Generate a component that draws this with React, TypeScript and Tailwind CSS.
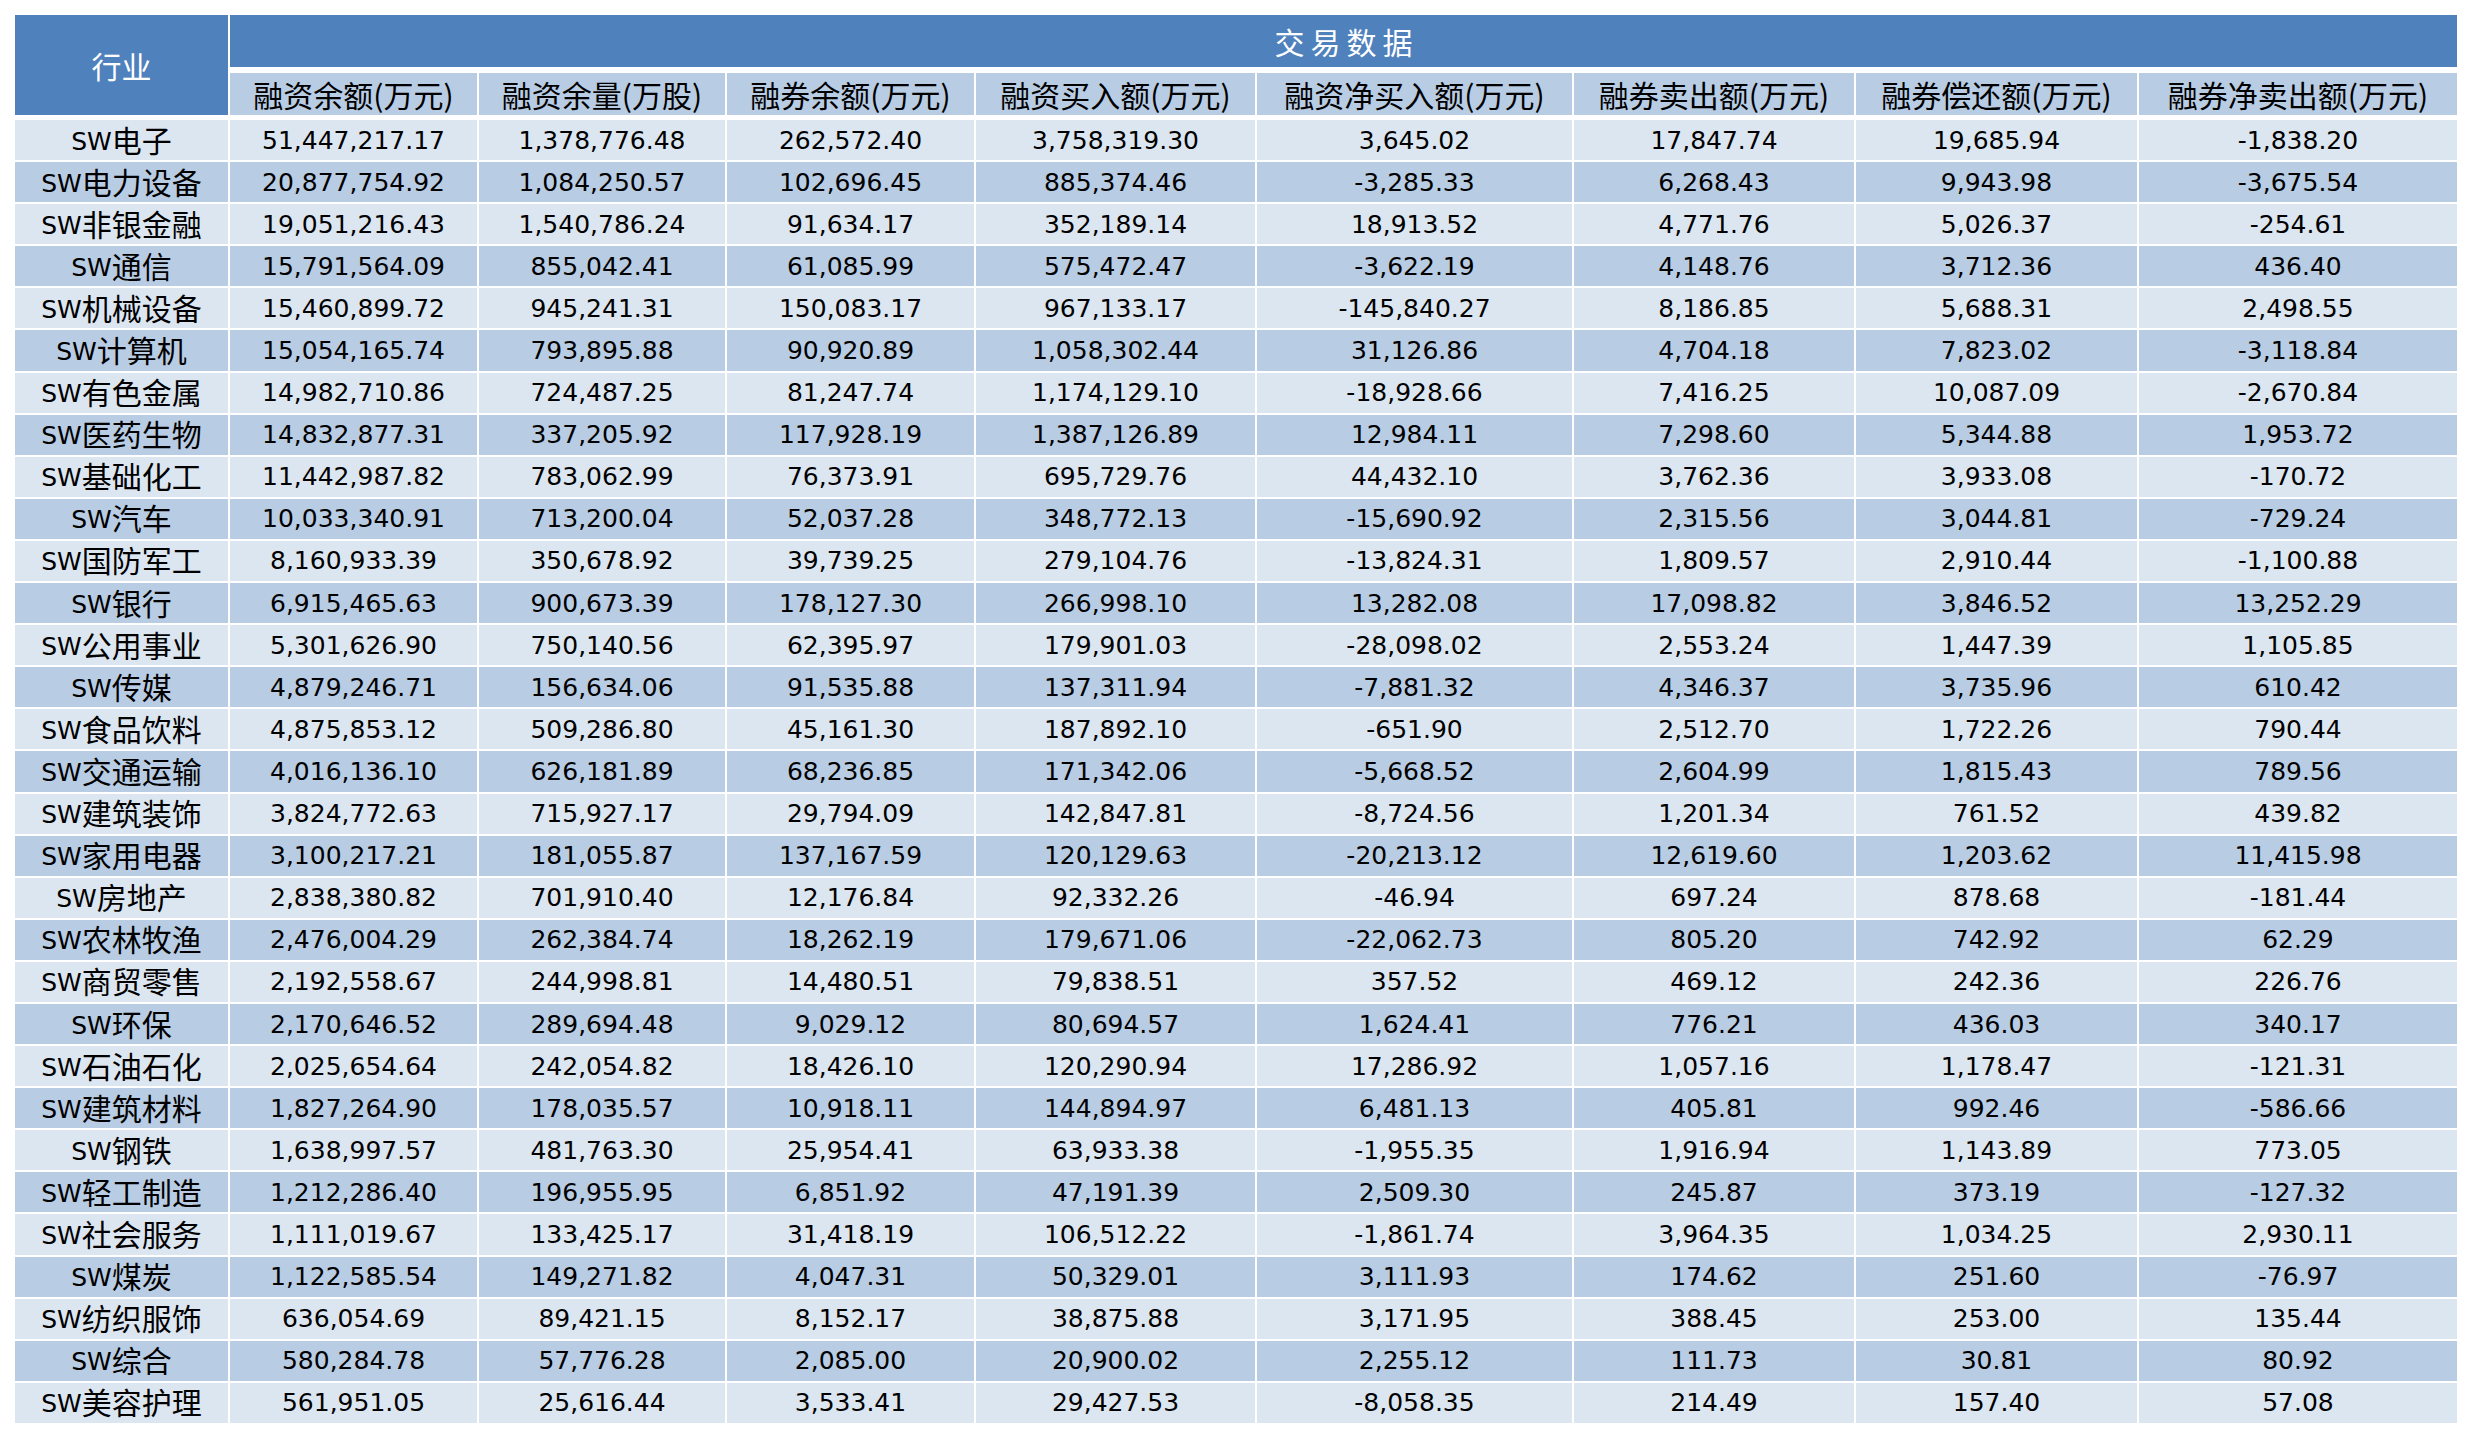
const headers = [
  "融资余额(万元)",
  "融资余量(万股)",
  "融券余额(万元)",
  "融资买入额(万元)",
  "融资净买入额(万元)",
  "融券卖出额(万元)",
  "融券偿还额(万元)",
  "融券净卖出额(万元)",
]

const rows: [string, string[]][] = [
  ["电子", ["51,447,217.17", "1,378,776.48", "262,572.40", "3,758,319.30", "3,645.02", "17,847.74", "19,685.94", "-1,838.20"]],
  ["电力设备", ["20,877,754.92", "1,084,250.57", "102,696.45", "885,374.46", "-3,285.33", "6,268.43", "9,943.98", "-3,675.54"]],
  ["非银金融", ["19,051,216.43", "1,540,786.24", "91,634.17", "352,189.14", "18,913.52", "4,771.76", "5,026.37", "-254.61"]],
  ["通信", ["15,791,564.09", "855,042.41", "61,085.99", "575,472.47", "-3,622.19", "4,148.76", "3,712.36", "436.40"]],
  ["机械设备", ["15,460,899.72", "945,241.31", "150,083.17", "967,133.17", "-145,840.27", "8,186.85", "5,688.31", "2,498.55"]],
  ["计算机", ["15,054,165.74", "793,895.88", "90,920.89", "1,058,302.44", "31,126.86", "4,704.18", "7,823.02", "-3,118.84"]],
  ["有色金属", ["14,982,710.86", "724,487.25", "81,247.74", "1,174,129.10", "-18,928.66", "7,416.25", "10,087.09", "-2,670.84"]],
  ["医药生物", ["14,832,877.31", "337,205.92", "117,928.19", "1,387,126.89", "12,984.11", "7,298.60", "5,344.88", "1,953.72"]],
  ["基础化工", ["11,442,987.82", "783,062.99", "76,373.91", "695,729.76", "44,432.10", "3,762.36", "3,933.08", "-170.72"]],
  ["汽车", ["10,033,340.91", "713,200.04", "52,037.28", "348,772.13", "-15,690.92", "2,315.56", "3,044.81", "-729.24"]],
  ["国防军工", ["8,160,933.39", "350,678.92", "39,739.25", "279,104.76", "-13,824.31", "1,809.57", "2,910.44", "-1,100.88"]],
  ["银行", ["6,915,465.63", "900,673.39", "178,127.30", "266,998.10", "13,282.08", "17,098.82", "3,846.52", "13,252.29"]],
  ["公用事业", ["5,301,626.90", "750,140.56", "62,395.97", "179,901.03", "-28,098.02", "2,553.24", "1,447.39", "1,105.85"]],
  ["传媒", ["4,879,246.71", "156,634.06", "91,535.88", "137,311.94", "-7,881.32", "4,346.37", "3,735.96", "610.42"]],
  ["食品饮料", ["4,875,853.12", "509,286.80", "45,161.30", "187,892.10", "-651.90", "2,512.70", "1,722.26", "790.44"]],
  ["交通运输", ["4,016,136.10", "626,181.89", "68,236.85", "171,342.06", "-5,668.52", "2,604.99", "1,815.43", "789.56"]],
  ["建筑装饰", ["3,824,772.63", "715,927.17", "29,794.09", "142,847.81", "-8,724.56", "1,201.34", "761.52", "439.82"]],
  ["家用电器", ["3,100,217.21", "181,055.87", "137,167.59", "120,129.63", "-20,213.12", "12,619.60", "1,203.62", "11,415.98"]],
  ["房地产", ["2,838,380.82", "701,910.40", "12,176.84", "92,332.26", "-46.94", "697.24", "878.68", "-181.44"]],
  ["农林牧渔", ["2,476,004.29", "262,384.74", "18,262.19", "179,671.06", "-22,062.73", "805.20", "742.92", "62.29"]],
  ["商贸零售", ["2,192,558.67", "244,998.81", "14,480.51", "79,838.51", "357.52", "469.12", "242.36", "226.76"]],
  ["环保", ["2,170,646.52", "289,694.48", "9,029.12", "80,694.57", "1,624.41", "776.21", "436.03", "340.17"]],
  ["石油石化", ["2,025,654.64", "242,054.82", "18,426.10", "120,290.94", "17,286.92", "1,057.16", "1,178.47", "-121.31"]],
  ["建筑材料", ["1,827,264.90", "178,035.57", "10,918.11", "144,894.97", "6,481.13", "405.81", "992.46", "-586.66"]],
  ["钢铁", ["1,638,997.57", "481,763.30", "25,954.41", "63,933.38", "-1,955.35", "1,916.94", "1,143.89", "773.05"]],
  ["轻工制造", ["1,212,286.40", "196,955.95", "6,851.92", "47,191.39", "2,509.30", "245.87", "373.19", "-127.32"]],
  ["社会服务", ["1,111,019.67", "133,425.17", "31,418.19", "106,512.22", "-1,861.74", "3,964.35", "1,034.25", "2,930.11"]],
  ["煤炭", ["1,122,585.54", "149,271.82", "4,047.31", "50,329.01", "3,111.93", "174.62", "251.60", "-76.97"]],
  ["纺织服饰", ["636,054.69", "89,421.15", "8,152.17", "38,875.88", "3,171.95", "388.45", "253.00", "135.44"]],
  ["综合", ["580,284.78", "57,776.28", "2,085.00", "20,900.02", "2,255.12", "111.73", "30.81", "80.92"]],
  ["美容护理", ["561,951.05", "25,616.44", "3,533.41", "29,427.53", "-8,058.35", "214.49", "157.40", "57.08"]],
]

const cols = "grid grid-cols-[213px_247px_246px_247px_279px_315px_280px_281px_318px] gap-x-[2px]"
const cjk = "font-['Noto_Sans_CJK_SC',sans-serif]"
const num = "font-['DejaVu_Sans','Noto_Sans_CJK_SC',sans-serif] text-[25px]"

export default function App() {
  return (
    <div className="min-h-screen bg-white pt-[15px] pl-[15px] text-black">
      {/* header */}
      <div className={`${cols} grid-rows-[52px_42px] gap-y-[6px]`}>
        <div className={`row-span-2 flex items-center justify-center bg-[#4f81bd] text-white text-[30px] ${cjk}`}>
          行业
        </div>
        <div className={`col-span-8 flex items-center justify-center bg-[#4f81bd] text-white text-[30px] tracking-[6px] pl-[6px] ${cjk}`}>
          交易数据
        </div>
        {headers.map((h) => (
          <div key={h} className={`flex items-center justify-center bg-[#b8cce4] text-[30px] leading-none ${cjk}`}>
            {h}
          </div>
        ))}
      </div>

      {/* body */}
      <div className={`${cols} mt-[5px] gap-y-[2px] auto-rows-[40.1px]`}>
        {rows.map(([name, vals], i) => {
          const bg = i % 2 === 0 ? "bg-[#dce6f1]" : "bg-[#b8cce4]"
          return [
            <div key={name} className={`${bg} flex items-center justify-center pb-[3px]`}>
              <span className="leading-none">
                <span className={`${num} align-[2px]`}>SW</span>
                <span className={`text-[30px] ${cjk}`}>{name}</span>
              </span>
            </div>,
            ...vals.map((v, j) => (
              <div key={name + j} className={`${bg} flex items-center justify-center leading-none ${num}`}>
                {v}
              </div>
            )),
          ]
        })}
      </div>
    </div>
  )
}
